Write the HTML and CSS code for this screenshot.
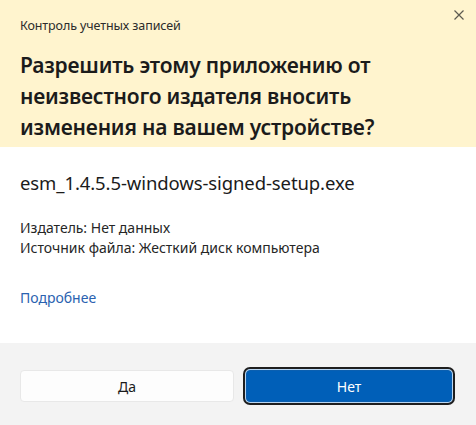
FILE: index.html
```html
<!DOCTYPE html>
<html lang="ru">
<head>
<meta charset="utf-8">
<title>Контроль учетных записей</title>
<link rel="stylesheet" href="styles.css">
</head>
<body>
<div class="dialog">
  <div class="header">
    <div class="topbar">
      <span class="app-title">Контроль учетных записей</span>
      <span class="close" aria-label="Закрыть">
        <svg width="10" height="10" viewBox="0 0 10 10"><path d="M0.5 0.5 L9.5 9.5 M9.5 0.5 L0.5 9.5" stroke="#5c5a50" stroke-width="1.2" fill="none"/></svg>
      </span>
    </div>
    <h1 class="question">Разрешить этому приложению от неизвестного издателя вносить изменения на вашем устройстве?</h1>
  </div>
  <div class="content">
    <div class="filename">esm_1.4.5.5-windows-signed-setup.exe</div>
    <div class="details">
      <div>Издатель: Нет данных</div>
      <div>Источник файла: Жесткий диск компьютера</div>
    </div>
    <a class="more" href="#">Подробнее</a>
  </div>
  <div class="footer">
    <button class="btn btn-yes">Да</button>
    <button class="btn btn-no">Нет</button>
  </div>
</div>
</body>
</html>
```

FILE: styles.css
```css
html, body {
  margin: 0;
  padding: 0;
  background: #ffffff;
}
body {
  font-family: "Noto Sans", "Open Sans", sans-serif;
  color: #1b1b1b;
}
.dialog {
  width: 476px;
  height: 425px;
  display: flex;
  flex-direction: column;
  background: #ffffff;
}
.header {
  background: #fff4ce;
  height: 147px;
  flex: none;
  box-sizing: border-box;
  padding: 0 20px;
}
.topbar {
  position: relative;
  height: 35px;
  padding-top: 17px;
  box-sizing: border-box;
}
.app-title {
  display: block;
  font-size: 12.5px;
  line-height: 18px;
  color: #2b2b2b;
  letter-spacing: -0.1px;
}
.close {
  position: absolute;
  top: 10px;
  right: -8px;
  display: flex;
}
.question {
  margin: 15px 0 0 0;
  font-size: 21px;
  line-height: 31px;
  font-weight: 600;
  color: #1b1b1b;
  letter-spacing: -0.2px;
  width: 400px;
}
.content {
  flex: 1;
  padding: 24px 20px 0 20px;
}
.filename {
  font-size: 18.5px;
  line-height: 24px;
  color: #1b1b1b;
  letter-spacing: -0.1px;
}
.details {
  margin-top: 23px;
  font-size: 14px;
  line-height: 20px;
  color: #262626;
}
.more {
  display: block;
  width: max-content;
  margin-top: 30px;
  font-size: 14px;
  line-height: 20px;
  color: #2a62b0;
  text-decoration: none;
}
.footer {
  background: #f3f3f3;
  height: 82px;
  flex: none;
  box-sizing: border-box;
  display: flex;
  align-items: flex-start;
  gap: 12px;
  padding: 27px 24px 0 20px;
}
.btn {
  height: 32px;
  border-radius: 4px;
  font-family: "Noto Sans", "Open Sans", sans-serif;
  font-size: 14px;
  cursor: pointer;
}
.btn-yes {
  width: 214px;
  background: #fdfdfd;
  border: 1px solid #e8e8e8;
  color: #1b1b1b;
}
.btn-no {
  width: 206px;
  background: #005fb8;
  border: 1px solid #0a5fb0;
  color: #ffffff;
  box-shadow: 0 0 0 1px #b9d6f2, 0 0 0 3px #1e1e1e;
}
```
